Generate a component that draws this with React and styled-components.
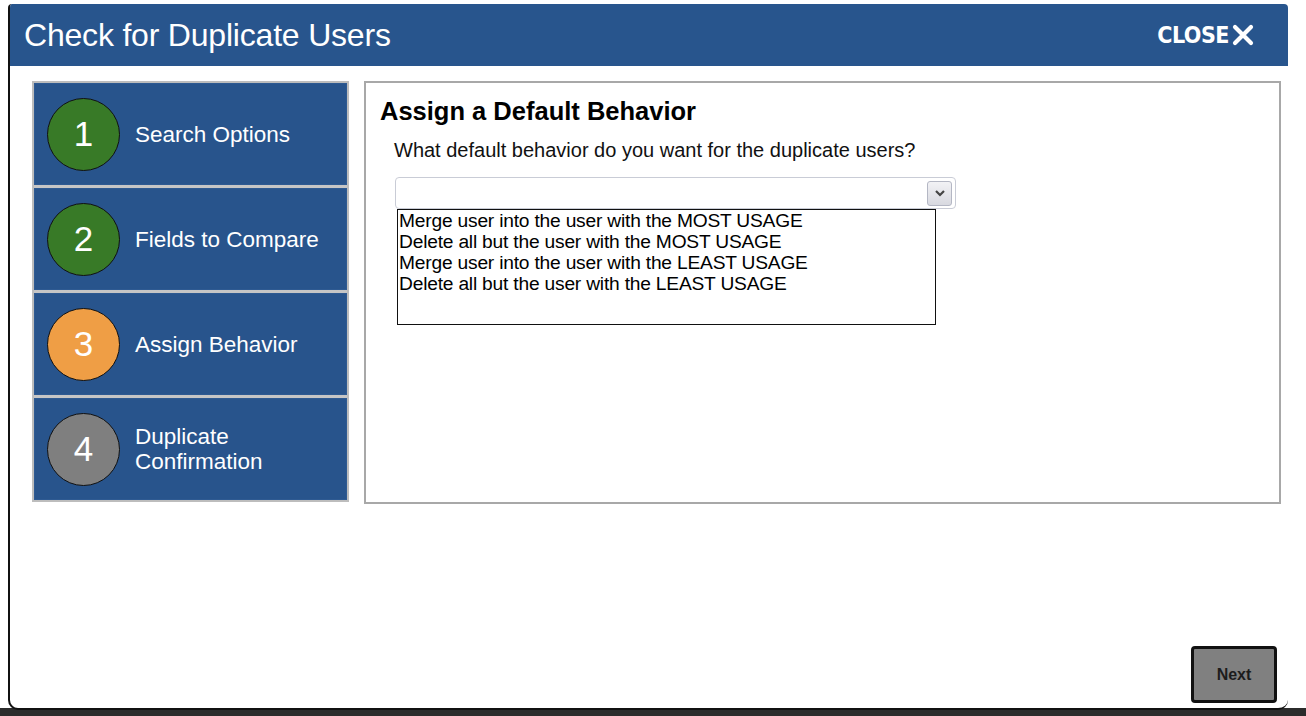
import React from "react";
import styled, { createGlobalStyle } from "styled-components";

const GlobalStyle = createGlobalStyle`
  html, body {
    margin: 0;
    padding: 0;
    background: #ffffff;
    font-family: "Liberation Sans", Arial, sans-serif;
  }
`;

const steps = [
  { num: 1, label: "Search Options", color: "#387a27" },
  { num: 2, label: "Fields to Compare", color: "#387a27" },
  { num: 3, label: "Assign Behavior", color: "#ef9e45" },
  { num: 4, label: "Duplicate Confirmation", color: "#7f7f7f" },
];

const options = [
  "Merge user into the user with the MOST USAGE",
  "Delete all but the user with the MOST USAGE",
  "Merge user into the user with the LEAST USAGE",
  "Delete all but the user with the LEAST USAGE",
];

export default function App() {
  return (
    <>
      <GlobalStyle />
      <Page>
        <Dialog>
          <Header>
            <Title>Check for Duplicate Users</Title>
            <Close>
              CLOSE
              <svg width="22" height="22" viewBox="0 0 22 22">
                <path
                  d="M3 3 L19 19 M19 3 L3 19"
                  stroke="#fff"
                  strokeWidth="4.2"
                  strokeLinecap="round"
                />
              </svg>
            </Close>
          </Header>

          <Body>
            <Main>
              <Steps>
                {steps.map((s) => (
                  <Step key={s.num}>
                    <Circle $color={s.color}>{s.num}</Circle>
                    <StepLabel>{s.label}</StepLabel>
                  </Step>
                ))}
              </Steps>

              <Panel>
                <Heading>Assign a Default Behavior</Heading>
                <Question>
                  What default behavior do you want for the duplicate users?
                </Question>
                <SelectBox>
                  <Arrow>
                    <svg width="12" height="8" viewBox="0 0 12 8">
                      <path
                        d="M2 2 L6 6 L10 2"
                        stroke="#444"
                        strokeWidth="2.2"
                        fill="none"
                      />
                    </svg>
                  </Arrow>
                </SelectBox>
                <ListBox>
                  {options.map((o) => (
                    <Option key={o}>{o}</Option>
                  ))}
                </ListBox>
              </Panel>
            </Main>

            <Footer>
              <NextButton>Next</NextButton>
            </Footer>
          </Body>
        </Dialog>
      </Page>
    </>
  );
}

const Page = styled.div`
  width: 1306px;
  height: 716px;
  padding: 4px 18px 6px 8px;
  box-sizing: border-box;
  background: linear-gradient(to bottom, #fff 0, #fff 708px, #2b2b2b 708px);
`;

const Dialog = styled.div`
  height: 706px;
  background: #fff;
  border-left: 2px solid #111;
  border-bottom: 2px solid #111;
  border-radius: 4px 4px 10px 10px;
  display: flex;
  flex-direction: column;
  overflow: hidden;
  box-sizing: border-box;
`;

const Header = styled.div`
  height: 62px;
  flex-shrink: 0;
  background: #28558d;
  display: flex;
  align-items: center;
  justify-content: space-between;
  padding: 0 34px 0 14px;
`;

const Title = styled.h1`
  margin: 0;
  color: #fff;
  font-family: "Liberation Sans", Arial, sans-serif;
  font-weight: 400;
  font-size: 32px;
  letter-spacing: -0.2px;
`;

const Close = styled.div`
  display: flex;
  align-items: center;
  gap: 3px;
  color: #fff;
  font-family: "DejaVu Sans Condensed", "DejaVu Sans", sans-serif;
  font-weight: 700;
  font-size: 23px;
  letter-spacing: -0.5px;
`;

const Body = styled.div`
  flex: 1;
  display: flex;
  flex-direction: column;
  justify-content: space-between;
  padding: 15px 7px 5px 22px;
`;

const Main = styled.div`
  display: grid;
  grid-template-columns: 317px 1fr;
  gap: 15px;
  align-items: start;
`;

const Steps = styled.div`
  display: flex;
  flex-direction: column;
  background: #c6c6c6;
  border: 2px solid #bdbdbd;
  gap: 3px;
`;

const Step = styled.div`
  height: 102px;
  background: #28548c;
  display: flex;
  align-items: center;
  gap: 15px;
  padding-left: 13px;
  box-shadow: inset 0 0 0 1px #2e5a92;
`;

const Circle = styled.div`
  width: 71px;
  height: 71px;
  flex-shrink: 0;
  border-radius: 50%;
  border: 1px solid #111;
  background: ${(p) => p.$color};
  color: #fff;
  display: flex;
  align-items: center;
  justify-content: center;
  font-size: 35px;
  font-family: "Liberation Sans", Arial, sans-serif;
`;

const StepLabel = styled.div`
  color: #fff;
  font-size: 22.5px;
  line-height: 25px;
  max-width: 190px;
`;

const Panel = styled.div`
  height: 423px;
  box-sizing: border-box;
  border: 2px solid #a8a8a8;
  background: #fff;
  padding: 13px 14px;
`;

const Heading = styled.h2`
  margin: 0;
  font-size: 25.5px;
  font-weight: 700;
  color: #000;
  line-height: 30px;
  letter-spacing: 0;
`;

const Question = styled.p`
  margin: 12px 0 0 14px;
  font-size: 20px;
  line-height: 24px;
  color: #111;
`;

const SelectBox = styled.div`
  margin: 15px 0 0 15px;
  width: 561px;
  height: 32px;
  box-sizing: border-box;
  border: 1px solid #c9ccd6;
  border-radius: 4px;
  display: flex;
  align-items: center;
  justify-content: flex-end;
  padding-right: 3px;
  background: #fff;
`;

const Arrow = styled.div`
  width: 25px;
  height: 25px;
  box-sizing: border-box;
  border: 1px solid #b4b7c4;
  border-radius: 3px;
  background: linear-gradient(#f2f2f5, #d8d9e0);
  display: flex;
  align-items: center;
  justify-content: center;
`;

const ListBox = styled.div`
  margin-left: 17px;
  width: 539px;
  height: 116px;
  box-sizing: border-box;
  border: 1px solid #111;
  padding: 0 0 0 1px;
`;

const Option = styled.div`
  font-size: 19.2px;
  line-height: 21px;
  color: #000;
  letter-spacing: -0.2px;
`;

const Footer = styled.div`
  display: flex;
  justify-content: flex-end;
  padding-right: 4px;
`;

const NextButton = styled.button`
  width: 86px;
  height: 57px;
  background: #808080;
  border: 3px solid #111;
  border-radius: 4px;
  font-family: "Liberation Sans", Arial, sans-serif;
  font-weight: 700;
  font-size: 16px;
  color: #1c1c1c;
  cursor: pointer;
`;
